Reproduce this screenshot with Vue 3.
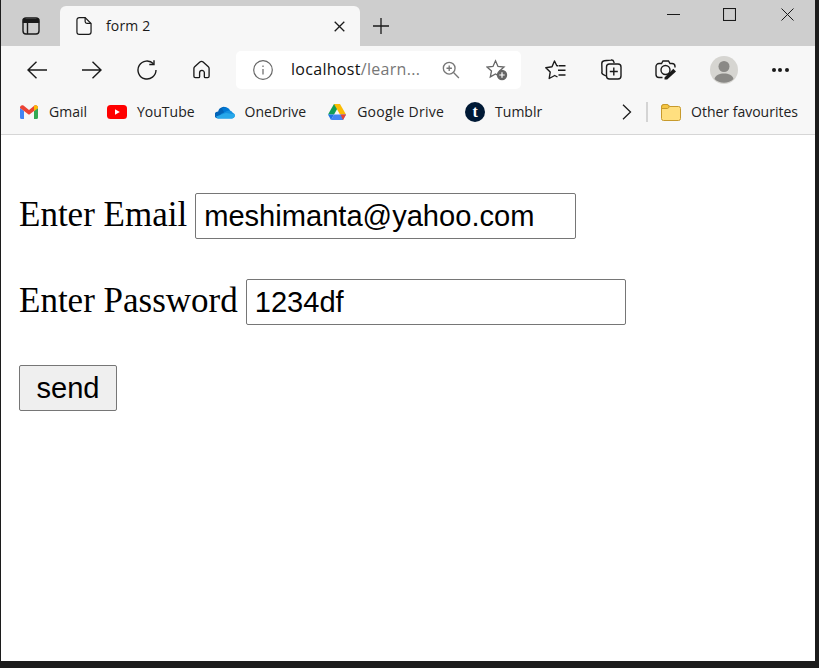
<template>
  <div class="screen">
    <div class="chrome">
      <div class="titlebar">
        <button class="tab-actions">
          <svg width="20" height="20" viewBox="0 0 20 20" fill="none" stroke="#1a1a1a" stroke-width="1.4">
            <rect x="2" y="2" width="16" height="16" rx="3" />
            <path d="M2.500 3.500h15v2.800h-15z" fill="#1a1a1a" />
            <path d="M6.500 6v12" />
          </svg>
        </button>
        <div class="tab">
          <svg class="tab-doc" width="16" height="20" viewBox="0 0 17 20" fill="none" stroke="#1a1a1a" stroke-width="1.3">
            <path d="M3.500 1h6.200L16 7.300V16.500a2.500 2.500 0 0 1-2.500 2.500h-10A2.500 2.500 0 0 1 1 16.500v-13A2.500 2.500 0 0 1 3.500 1z" />
            <path d="M9.700 1v4.300a2 2 0 0 0 2 2H16" />
          </svg>
          <span class="tab-title">form 2</span>
          <svg class="tab-close" width="11" height="11" viewBox="0 0 11 11" stroke="#1a1a1a" stroke-width="1.3">
            <path d="M.7.700l9.600 9.600M10.300.700L.7 10.300" />
          </svg>
        </div>
        <button class="new-tab">
          <svg width="18" height="18" viewBox="0 0 18 18" stroke="#1a1a1a" stroke-width="1.3">
            <path d="M9 1v16M1 9h16" />
          </svg>
        </button>
        <div class="window-controls">
          <svg width="13" height="13" viewBox="0 0 13 13" stroke="#1a1a1a" stroke-width="1">
            <path d="M0 6.500h13" />
          </svg>
          <svg width="13" height="13" viewBox="0 0 13 13" fill="none" stroke="#1a1a1a" stroke-width="1.1">
            <rect x=".5" y=".5" width="12" height="12" />
          </svg>
          <svg class="window-close" width="13" height="13" viewBox="0 0 13 13" stroke="#1a1a1a" stroke-width="1">
            <path d="M.5.500l12 12M12.500.500l-12 12" />
          </svg>
        </div>
      </div>

      <div class="toolbar">
        <div class="nav-group">
          <button class="tool">
            <svg width="20" height="18" viewBox="0 0 20 18" fill="none" stroke="#1a1a1a" stroke-width="1.4">
              <path d="M20 9H1M9.500.7L1 9l8.500 8.300" />
            </svg>
          </button>
          <button class="tool">
            <svg width="20" height="18" viewBox="0 0 20 18" fill="none" stroke="#1a1a1a" stroke-width="1.4">
              <path d="M0 9h19M10.500.7L19 9l-8.500 8.300" />
            </svg>
          </button>
          <button class="tool">
            <svg width="20" height="20" viewBox="0 0 20 20" fill="none" stroke="#1a1a1a" stroke-width="1.4">
              <path d="M16.500 3.800A9 9 0 1 0 19 10" />
              <path d="M17 .3v4.200h-4.700" />
            </svg>
          </button>
          <button class="tool home">
            <svg width="19" height="19" viewBox="0 0 20 20" fill="none" stroke="#1a1a1a" stroke-width="1.4">
              <path d="M8.300 2.200a2.500 2.500 0 0 1 3.400 0l5.500 5a2.500 2.500 0 0 1 .8 1.800v8a1.500 1.500 0 0 1-1.500 1.500h-2.500a1 1 0 0 1-1-1v-4a2.500 2.500 0 0 0-5 0v4a1 1 0 0 1-1 1H3.500A1.500 1.500 0 0 1 2 17V9a2.500 2.500 0 0 1 .8-1.800z" />
            </svg>
          </button>
        </div>

        <div class="address">
          <svg class="info" width="20" height="20" viewBox="0 0 20 20" fill="none" stroke="#666" stroke-width="1.200">
            <circle cx="10" cy="10" r="9.300" />
            <path d="M10 9v5.500M10 5.500v1.400" />
          </svg>
          <span class="url">localhost<span class="url-path">/learn...</span></span>
          <svg class="zoom" width="18" height="18" viewBox="0 0 20 20" fill="none" stroke="#777" stroke-width="1.500">
            <circle cx="8" cy="8" r="6.500" />
            <path d="M12.800 12.800l6 6M8 5v6M5 8h6" />
          </svg>
          <svg class="add-fav" width="22" height="22" viewBox="0 0 22 22">
            <path d="M9.500 1.800l2.500 5.600 6 .6-4.500 4 1.200 5.900-5.200-3-5.200 3 1.200-5.900-4.500-4 6-.6z" fill="none" stroke="#666" stroke-width="1.300" />
            <circle cx="16" cy="16" r="5.200" fill="#666" />
            <path d="M16 13.300v5.400M13.300 16h5.400" stroke="#fff" stroke-width="1.200" />
          </svg>
        </div>

        <div class="tool-group">
          <button class="tool">
            <svg width="22" height="20" viewBox="0 0 22 20" fill="none" stroke="#1a1a1a" stroke-width="1.400" stroke-linejoin="round">
              <path d="M13 5.700h-1.200L9.500 1 7 6.800.8 7.800l4.400 4.300-1 6.400 5.500-3 2.800 1.500" />
              <path d="M13.500 5.700h7M13 10.300h7.500M13.500 15h7" />
            </svg>
          </button>
          <button class="tool">
            <svg width="22" height="21" viewBox="0 0 22 21" fill="none" stroke="#1a1a1a" stroke-width="1.400">
              <path d="M6 17L3 15.300a2 2 0 0 1-1-2.500L1.800 5a3 3 0 0 1 2.500-3.200L11 1a2.500 2.500 0 0 1 2.800 1.800l.4 1.200" />
              <rect x="6.500" y="5" width="14.500" height="15" rx="3" />
              <path d="M13.800 8.500v8M9.800 12.500h8" />
            </svg>
          </button>
          <button class="tool">
            <svg width="22" height="21" viewBox="0 0 22 21" fill="none" stroke="#1a1a1a" stroke-width="1.400">
              <path d="M7.500 18.500H4a3 3 0 0 1-3-3V7.500a3 3 0 0 1 3-3h2.500L8 2h5.500L15 4.500h2a3 3 0 0 1 3 3v1" />
              <circle cx="10.500" cy="11" r="4.500" />
              <path d="M9.500 18.500l8.800-8.800 2.700 2.700-8.800 8.100H9.500z" fill="#1a1a1a" stroke="none" />
            </svg>
          </button>
          <button class="profile">
            <svg width="28" height="28" viewBox="0 0 28 28">
              <circle cx="14" cy="14" r="14" fill="#d6d5d1" />
              <circle cx="14" cy="10.500" r="5.500" fill="#8a8986" />
              <path d="M4.500 23c1-4 5-5.500 9.500-5.500s8.500 1.500 9.500 5.500a14 14 0 0 1-19 0z" fill="#8a8986" />
            </svg>
          </button>
          <button class="more">
            <span class="dot"></span><span class="dot"></span><span class="dot"></span>
          </button>
        </div>
      </div>

      <div class="bookmarks">
        <a class="bookmark gmail">
          <svg width="18" height="14" viewBox="0 0 18 14">
            <path d="M0 3v9.500A1.500 1.500 0 0 0 1.500 14H4V6z" fill="#4285f4" />
            <path d="M14 6v8h2.500a1.500 1.500 0 0 0 1.500-1.500V3z" fill="#34a853" />
            <path d="M0 2.500C0 .5 2 -.5 3.500.6L9 5l5.500-4.400C16-.5 18 .5 18 2.500V3l-4 3-5 3.800L4 6 0 3z" fill="#ea4335" />
            <path d="M14 .9l.5-.3C16-.5 18 .5 18 2.500V3l-4 3z" fill="#fbbc04" />
          </svg>
          <span class="bookmark-name">Gmail</span>
        </a>
        <a class="bookmark youtube">
          <svg width="20" height="14" viewBox="0 0 20 14">
            <rect width="20" height="14" rx="3.500" fill="#f00" />
            <path d="M8 4.200v5.600L12.800 7z" fill="#fff" />
          </svg>
          <span class="bookmark-name">YouTube</span>
        </a>
        <a class="bookmark onedrive">
          <svg width="20" height="14" viewBox="0 0 20 14">
            <path d="M3 13.500a3.500 3.500 0 0 1 .2-7A5.500 5.500 0 0 1 12.500 3.500L10 9z" fill="#0364b8" />
            <path d="M7 3.500a5.200 5.200 0 0 1 8.300 2.500L10 9z" fill="#0078d4" />
            <path d="M3 13.500h14a3 3 0 0 0 .8-5.800A4.500 4.500 0 0 0 12 6L6 9z" fill="#1490df" />
            <path d="M3 13.500h14a3 3 0 0 0 2.700-4.200L11 8 1 11.500a3.500 3.500 0 0 0 2 2z" fill="#28a8ea" />
          </svg>
          <span class="bookmark-name">OneDrive</span>
        </a>
        <a class="bookmark drive">
          <svg width="18" height="16" viewBox="0 0 18 16">
            <path d="M6 0h6l-6 10.500H0z" fill="#0f9d58" />
            <path d="M12 0l6 10.500h-6L6 0z" fill="#fbbc04" />
            <path d="M3 16l3-5.500h12L15 16z" fill="#4285f4" />
            <path d="M15 16l3-5.500h-5.500z" fill="#ea4335" />
            <path d="M0 10.500h6L3 16z" fill="#1a73e8" />
          </svg>
          <span class="bookmark-name drive-name">Google Drive</span>
        </a>
        <a class="bookmark tumblr">
          <span class="tumblr-logo">t</span>
          <span class="bookmark-name">Tumblr</span>
        </a>
        <button class="overflow">
          <svg width="10" height="16" viewBox="0 0 10 16" fill="none" stroke="#1a1a1a" stroke-width="1.300">
            <path d="M1 .8L8.500 8 1 15.200" />
          </svg>
        </button>
        <span class="separator"></span>
        <a class="bookmark other">
          <svg width="20" height="17" viewBox="0 0 20 17">
            <path d="M.5 3A2.500 2.500 0 0 1 3 .5h3.500L9 2.500h8.500A2 2 0 0 1 19.500 4.500V14.500a2 2 0 0 1-2 2h-15a2 2 0 0 1-2-2z" fill="#ffdf7f" stroke="#c79a2c" />
            <path d="M.5 3A2.500 2.500 0 0 1 3 .5h3.500L8.500 3 6.500 4.500H.5z" fill="#f5c542" stroke="#c79a2c" />
          </svg>
          <span class="bookmark-name">Other favourites</span>
        </a>
      </div>
    </div>

    <form class="page" @submit.prevent>
      <div class="field">
        <label class="field-label" for="email">Enter Email</label>
        <input id="email" class="field-input" type="text" value="meshimanta@yahoo.com" />
      </div>
      <div class="field">
        <label class="field-label" for="password">Enter Password</label>
        <input id="password" class="field-input" type="text" value="1234df" />
      </div>
      <button class="send" type="submit">send</button>
    </form>
  </div>
</template>

<script setup>
</script>

<style>
html,
body {
  margin: 0;
  overflow: hidden;
  background: #1c1c1c;
}
</style>

<style scoped>
.screen {
  width: 819px;
  height: 668px;
  display: flex;
  flex-direction: column;
  background: #1c1c1c;
  font-family: "Open Sans", "Noto Sans", sans-serif;
  font-size: 14px;
  color: #1a1a1a;
}

button {
  border: none;
  background: none;
  padding: 0;
  display: flex;
  align-items: center;
  justify-content: center;
}

.chrome {
  margin-left: 1px;
  width: 814px;
  background: #f7f7f7;
}

.titlebar {
  height: 46px;
  background: #cecece;
  display: flex;
  align-items: flex-end;
}

.tab-actions {
  width: 59px;
  height: 40px;
}

.tab {
  width: 300px;
  height: 40px;
  box-sizing: border-box;
  padding: 0 15px 0 16px;
  background: #f7f7f7;
  border-radius: 6px 6px 0 0;
  display: flex;
  align-items: center;
}

.tab-title {
  margin: 0 0 2px 14px;
  letter-spacing: 0.15px;
  flex: 1;
}

.new-tab {
  width: 42px;
  height: 40px;
}

.window-controls {
  margin-left: auto;
  align-self: flex-start;
  height: 28px;
  padding-right: 21px;
  display: flex;
  align-items: center;
  gap: 43px;
}

.window-close {
  margin-left: 2px;
}

.toolbar {
  height: 47px;
  display: flex;
  align-items: center;
  padding-left: 8px;
}

.nav-group,
.tool-group {
  display: flex;
  align-items: center;
}

.tool {
  width: 55px;
  height: 38px;
}

.address {
  width: 285px;
  height: 38px;
  margin-left: 7px;
  border-radius: 5px;
  background: #fff;
  display: flex;
  align-items: center;
  box-sizing: border-box;
  padding-left: 17px;
}

.url {
  margin: 0 0 2px 18px;
  width: 130px;
  font-size: 16px;
  letter-spacing: 0.3px;
  color: #111;
  white-space: nowrap;
}

.url-path {
  color: #777;
}

.zoom {
  margin-left: 21px;
}

.add-fav {
  margin-left: 26px;
}

.tool-group {
  margin-left: 7px;
}

.profile {
  width: 60px;
  height: 38px;
  padding-left: 1px;
}

.more {
  width: 54px;
  height: 38px;
  gap: 2.500px;
}

.dot {
  width: 4px;
  height: 4px;
  border-radius: 50%;
  background: #1a1a1a;
}

.bookmarks {
  height: 38px;
  padding: 0 0 3px 19px;
  border-bottom: 1px solid #d6d6d6;
  display: flex;
  align-items: center;
  font-size: 14px;
  color: #222;
}

.bookmark {
  display: flex;
  align-items: center;
  white-space: nowrap;
  gap: 11px;
}

.bookmark-name {
  margin-bottom: 2px;
}

.gmail { margin-right: 20px; }
.youtube { gap: 10px; margin-right: 20px; }
.onedrive { gap: 10px; margin-right: 22px; }
.drive { margin-right: 21px; }
.drive-name { letter-spacing: 0.25px; }
.tumblr { gap: 10px; }

.tumblr-logo {
  width: 20px;
  height: 20px;
  border-radius: 50%;
  background: #001935;
  color: #fff;
  font-family: "Liberation Serif", serif;
  font-weight: 700;
  font-size: 16px;
  line-height: 19px;
  text-align: center;
}

.overflow {
  margin-left: auto;
  width: 10px;
}

.separator {
  width: 2px;
  height: 20px;
  margin: 0 13px 0 14px;
  background: #d4d4d4;
}

.other {
  gap: 10px;
  width: 154px;
}

.page {
  flex: 1;
  width: 814px;
  margin-left: 1px;
  margin-bottom: 7px;
  background: #fff;
  box-sizing: border-box;
  padding: 58px 0 0 18px;
  display: flex;
  flex-direction: column;
  align-items: flex-start;
  gap: 40px;
}

.field {
  display: flex;
  align-items: center;
  gap: 8px;
}

.field-label {
  font-family: "Liberation Serif", serif;
  font-size: 35px;
  line-height: 40px;
  margin-bottom: 2px;
  color: #000;
}

.field-input {
  width: 380.500px;
  height: 46px;
  box-sizing: border-box;
  padding: 0 8px;
  border: 1px solid #767676;
  border-radius: 2px;
  background: #fff;
  font-family: "Liberation Sans", Arial, sans-serif;
  font-size: 29.100px;
  color: #000;
  outline: none;
}

.send {
  width: 98px;
  height: 46px;
  box-sizing: border-box;
  border: 1px solid #767676;
  border-radius: 2px;
  background: #efefef;
  font-family: "Liberation Sans", Arial, sans-serif;
  font-size: 29.100px;
  color: #000;
}
</style>
